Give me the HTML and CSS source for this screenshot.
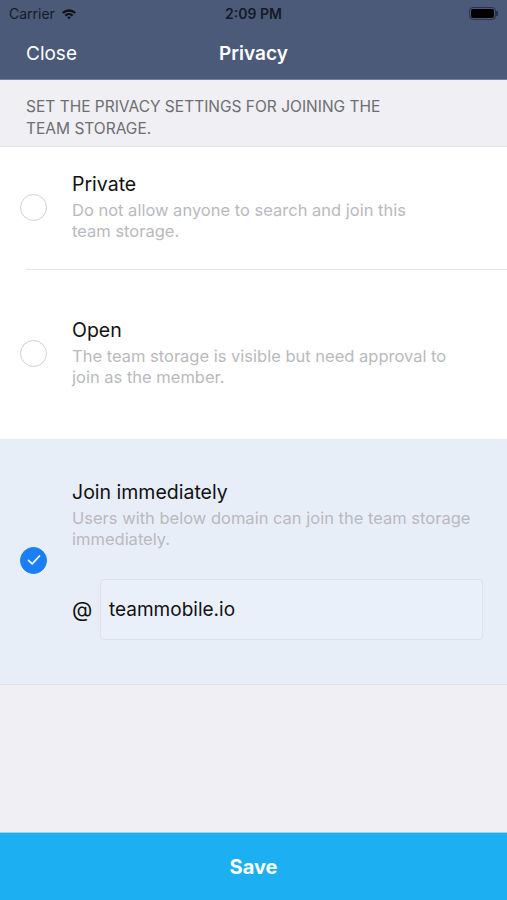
FILE: index.html
```html
<!DOCTYPE html>
<html lang="en">
<head>
    <meta charset="UTF-8">
    <meta name="viewport" content="width=device-width, initial-scale=1.0">
    <title>Privacy</title>
    <link rel="stylesheet" href="styles.css">
</head>
<body>
    <div class="topbar">
        <div class="statusbar">
            <div class="carrier">
                Carrier
                <svg class="wifi" width="16" height="12" viewBox="0 0 16 12">
                    <path d="M1 4.2 A10 10 0 0 1 15 4.2 L13.4 5.8 A7.8 7.8 0 0 0 2.6 5.8 Z" fill="#111"/>
                    <path d="M3.6 6.8 A6.3 6.3 0 0 1 12.4 6.8 L10.8 8.4 A4 4 0 0 0 5.2 8.4 Z" fill="#111"/>
                    <path d="M6.2 9.4 A2.6 2.6 0 0 1 9.8 9.4 L8 11.3 Z" fill="#111"/>
                </svg>
            </div>
            <div class="time">2:09 PM</div>
            <div class="battery">
                <span class="battery-body"><span class="battery-fill"></span></span>
                <span class="battery-nub"></span>
            </div>
        </div>
        <div class="navbar">
            <a href="#" class="nav-close">Close</a>
            <div class="nav-title">Privacy</div>
        </div>
    </div>

    <div class="section-header">SET THE PRIVACY SETTINGS FOR JOINING THE<br>TEAM STORAGE.</div>

    <div class="options">
        <div class="option option-private">
            <span class="radio"></span>
            <div class="option-text">
                <div class="option-title">Private</div>
                <div class="option-desc">Do not allow anyone to search and join this<br>team storage.</div>
            </div>
        </div>
        <div class="option option-open">
            <span class="radio"></span>
            <div class="option-text">
                <div class="option-title">Open</div>
                <div class="option-desc">The team storage is visible but need approval to<br>join as the member.</div>
            </div>
        </div>
        <div class="option option-join selected">
            <span class="radio checked">
                <svg width="16" height="14" viewBox="0 0 16 14">
                    <path d="M2.5 7.4 L6.2 10.8 L13.5 3" fill="none" stroke="#fff" stroke-width="1.7" stroke-linecap="round" stroke-linejoin="round"/>
                </svg>
            </span>
            <div class="option-text">
                <div class="option-title">Join immediately</div>
                <div class="option-desc">Users with below domain can join the team storage<br>immediately.</div>
                <div class="domain">
                    <span class="at">@</span>
                    <div class="domain-input">teammobile.io</div>
                </div>
            </div>
        </div>
    </div>

    <div class="filler"></div>

    <button class="save">Save</button>
</body>
</html>
```

FILE: styles.css
```css
* {
    box-sizing: border-box;
}
html, body {
    height: 100%;
}
body {
    margin: 0;
    font-family: Inter, "Noto Sans", sans-serif;
    background-color: #efeff4;
    display: flex;
    flex-direction: column;
    overflow: hidden;
}
.topbar {
    background-color: #4b5a78;
    border-bottom: 1px solid #6b7ea3;
}
.statusbar {
    height: 27px;
    display: flex;
    align-items: center;
    justify-content: space-between;
    padding: 0 9px;
    position: relative;
    font-size: 14px;
    color: #151a25;
}
.carrier {
    display: flex;
    align-items: center;
    gap: 6px;
}
.time {
    position: absolute;
    left: 0;
    right: 0;
    text-align: center;
    font-weight: 600;
}
.battery {
    display: flex;
    align-items: center;
}
.battery-body {
    width: 27px;
    height: 13px;
    border: 1px solid #2a3347;
    border-radius: 4px;
    padding: 1px;
    display: flex;
}
.battery-fill {
    flex: 1;
    background-color: #000;
    border-radius: 2px;
}
.battery-nub {
    width: 2px;
    height: 5px;
    background-color: #2a3347;
    border-radius: 0 1px 1px 0;
}
.navbar {
    height: 52px;
    display: flex;
    align-items: center;
    position: relative;
    padding: 0 26px;
}
.nav-close {
    color: #fff;
    text-decoration: none;
    font-size: 19px;
}
.nav-title {
    position: absolute;
    left: 0;
    right: 0;
    text-align: center;
    color: #fff;
    font-size: 19px;
    font-weight: 600;
    pointer-events: none;
}
.section-header {
    padding: 16px 26px 6px;
    font-size: 15.5px;
    line-height: 22px;
    color: #6d6d72;
    border-bottom: 1px solid #e4e4ea;
}
.options {
    background-color: #fff;
}
.option {
    display: flex;
    align-items: center;
    padding-left: 20px;
}
.option-text {
    flex: 1;
    margin-left: 25px;
}
.option-private {
    padding-top: 25px;
    padding-bottom: 27px;
}
.option-open {
    padding-top: 49px;
    padding-bottom: 51px;
    background-image: linear-gradient(#e6e6ea, #e6e6ea);
    background-size: calc(100% - 26px) 1px;
    background-position: 26px 0;
    background-repeat: no-repeat;
}
.option-join {
    padding-top: 41px;
    padding-bottom: 44px;
    border-bottom: 1px solid #dde2ea;
}
.selected {
    background-color: #e8eef8;
}
.option-title {
    font-size: 19.5px;
    line-height: 24px;
    color: #111;
}
.option-desc {
    margin-top: 4px;
    font-size: 16.5px;
    line-height: 21px;
    color: #b9b9be;
}
.radio {
    width: 27px;
    height: 27px;
    border-radius: 50%;
    border: 1.5px solid #cfcfd3;
    flex-shrink: 0;
    display: flex;
    align-items: center;
    justify-content: center;
}
.radio.checked {
    background-color: #1a7ff4;
    border-color: #1a7ff4;
}
.domain {
    display: flex;
    align-items: center;
    margin-top: 29px;
    margin-right: 24px;
}
.at {
    font-size: 21px;
    color: #111;
    width: 28px;
}
.domain-input {
    flex: 1;
    height: 61px;
    border: 1px solid #dde1e8;
    border-radius: 4px;
    background-color: #eaf0f9;
    display: flex;
    align-items: center;
    padding-left: 8px;
    font-size: 19px;
    color: #111;
}
.filler {
    flex: 1;
}
.save {
    height: 68px;
    border: none;
    border-top: 1px solid #8fd6f8;
    background-color: #1cb0f3;
    color: #fff;
    font-family: Inter, "Noto Sans", sans-serif;
    font-size: 20px;
    font-weight: 700;
    cursor: pointer;
    flex-shrink: 0;
}
```
